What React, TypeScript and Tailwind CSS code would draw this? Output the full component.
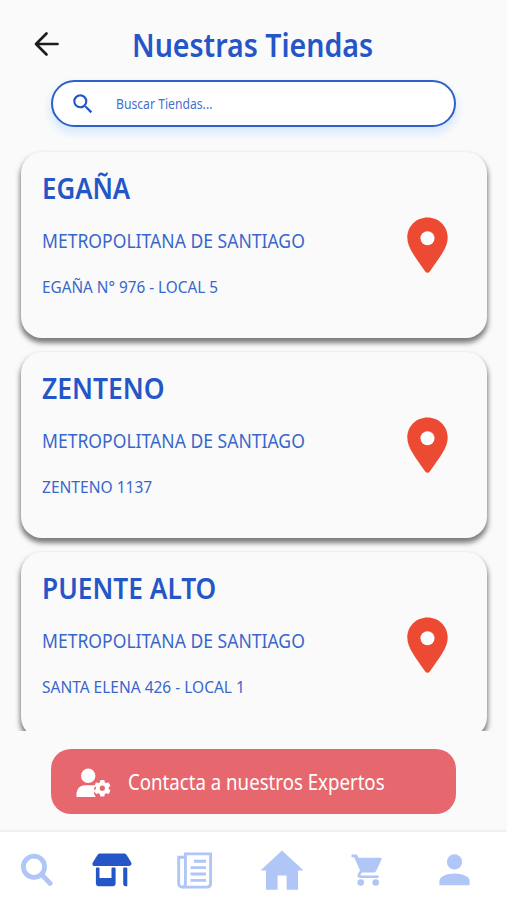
import { MdSearch } from 'react-icons/md';

const stores = [
  {
    name: 'EGAÑA',
    region: 'METROPOLITANA DE SANTIAGO',
    address: 'EGAÑA N° 976 - LOCAL 5',
    nameFit: 'scale-x-[0.89]',
    addressFit: 'scale-x-[0.9]',
  },
  {
    name: 'ZENTENO',
    region: 'METROPOLITANA DE SANTIAGO',
    address: 'ZENTENO 1137',
    nameFit: 'scale-x-[0.912]',
    addressFit: 'scale-x-[0.915]',
  },
  {
    name: 'PUENTE ALTO',
    region: 'METROPOLITANA DE SANTIAGO',
    address: 'SANTA ELENA 426 - LOCAL 1',
    nameFit: 'scale-x-[0.906]',
    addressFit: 'scale-x-[0.911]',
  },
];

function BackIcon() {
  return (
    <svg width="26" height="26" viewBox="0 0 26 26" fill="none" stroke="#1c1c1c" strokeWidth="2.7" strokeLinecap="round" strokeLinejoin="round">
      <path d="M13.500 2.500 3 13l10.500 10.500M3 13h21.500" />
    </svg>
  );
}

function PinIcon() {
  return (
    <svg className="-mt-px" width="41" height="56" viewBox="0 0 41 56" fill="#ec4a33">
      <path d="M20.500.5C9.300.5.3 9.200.3 20.500c0 5.300 2.200 10.300 5 15 3.700 6.200 8.300 12.300 12.700 18.700 1.600 2 3.400 2 5 0 4.400-6.400 9-12.500 12.700-18.700 2.800-4.700 5-9.700 5-15C40.700 9.200 31.700.5 20.500.5Z" />
      <circle cx="20.500" cy="21.200" r="7" fill="#fff" />
    </svg>
  );
}

function ExpertIcon() {
  return (
    <svg className="mt-[2px]" width="36" height="30" viewBox="0 0 36 30" fill="#fff">
      <circle cx="12.200" cy="7.800" r="7.200" />
      <path d="M.5 29v-2.500c0-5.500 3.800-9.200 8-9.200h8c1.400 0 2.200.2 3 .6l-1.700 2.700 1.400 2.500-1.400 2.500 2 3.400Z" />
      <g transform="translate(26.300 20.200)">
        <circle r="6.400" />
        <rect x="-2.300" y="-8.300" width="4.600" height="16.600" rx="1" />
        <rect x="-2.300" y="-8.300" width="4.600" height="16.600" rx="1" transform="rotate(60)" />
        <rect x="-2.300" y="-8.300" width="4.600" height="16.600" rx="1" transform="rotate(120)" />
        <circle r="2.600" fill="#e6686e" />
      </g>
    </svg>
  );
}

function NavSearchIcon() {
  return (
    <svg width="33" height="34" viewBox="0 0 33 34" fill="none" stroke="#b0c6f6">
      <circle cx="14" cy="13.800" r="10.600" strokeWidth="4.800" />
      <path d="m22 21.800 8.200 8.700" strokeWidth="4.800" strokeLinecap="round" />
    </svg>
  );
}

function NavStoreIcon() {
  return (
    <svg width="40" height="34" viewBox="0 0 40 34" fill="#2456c7">
      <path d="M8.300.5h23.600c1.300 0 2.200.5 2.900 1.700l4.300 7c1 1.800.2 3.800-2.300 3.800H2.700C.6 13-.2 11.200.8 9.400L5.300 2.200C6 1 7 .5 8.300.5Z" />
      <path d="M3.900 15.400c0-.6.3-.9.9-.9h1.500c.8 0 1.200.3 1.200 1V25H19.500v-9.500c0-.7.400-1 1.100-1h1.800c.8 0 1.200.3 1.200 1v14.700c0 2-1.100 3-3 3H7c-2 0-3.100-1-3.100-3ZM31.200 15.500c0-.7.400-1 1.100-1h1.800c.8 0 1.200.3 1.200 1v17.700h-1.600c-1.700 0-2.500-.8-2.500-2.400Z" />
    </svg>
  );
}

function NavNewsIcon() {
  return (
    <svg width="36" height="37" viewBox="0 0 36 37" fill="none" stroke="#b0c6f6" strokeWidth="2.900">
      <path d="M8.400 1.900h25.200v29.300c0 2.300-1.400 3.900-3.700 3.900H5.500c-2.300 0-3.800-1.500-3.800-3.700V5.200h6.700Z" />
      <path d="M8.400 5v26.400c0 2-.9 3.500-2.700 3.700M17 9.200h12M13.600 15.600H29M13.600 22H29M13.600 28.400H29" />
    </svg>
  );
}

function NavHomeIcon() {
  return (
    <svg className="-mt-px" width="44" height="40" viewBox="0 0 44 40" fill="#b0c6f6">
      <path d="M22 .4 43.500 20.600H38V39.700H26.600V25.500h-9v14.200H6V20.600H.5Z" />
    </svg>
  );
}

function NavCartIcon() {
  return (
    <svg width="31" height="33" viewBox="0 0 31 33" fill="#b0c6f6">
      <path d="M.5.6h4.600c.7 0 1.100.3 1.400 1l.9 2.100h22c1.100 0 1.600.8 1.100 1.700l-5.300 11.400c-.6 1.200-1.300 1.800-2.700 1.800H11l-1.400 2c-.3.500-.1.800.4.800h17.600v2.500H9.500c-2.700 0-3.700-2.100-2.500-4.200l2-3.300L3.300 3.300H.5Z" />
      <circle cx="9.700" cy="28.500" r="3.300" />
      <circle cx="24.700" cy="28.500" r="3.300" />
    </svg>
  );
}

function NavUserIcon() {
  return (
    <svg width="31" height="32" viewBox="0 0 31 32" fill="#b0c6f6">
      <circle cx="15.500" cy="7.900" r="7.600" />
      <path d="M.4 31.200V27c0-4.800 8.300-7.500 15.100-7.500s15.100 2.700 15.100 7.500v4.200Z" />
    </svg>
  );
}

export default function App() {
  return (
    <div className="flex h-[900px] w-[507px] flex-col overflow-hidden bg-[#fafafa] font-['Noto_Sans',sans-serif] text-[#2456c7]">
      <header className="flex h-20 shrink-0 items-center pt-2 pl-[33px]">
        <BackIcon />
        <h1 className="mt-px ml-[73px] origin-left scale-x-[0.865] text-[33px] font-semibold whitespace-nowrap">Nuestras Tiendas</h1>
      </header>

      <div className="ml-[51px] flex h-[47px] w-[405px] shrink-0 items-center rounded-full border-2 border-[#2f5fca] bg-white pl-[17px] shadow-[0_5px_8px_1px_rgba(190,220,255,0.6)]">
        <MdSearch size={26} />
        <span className="ml-[20px] origin-left scale-x-[0.87] text-[14px] whitespace-nowrap opacity-85">Buscar Tiendas...</span>
      </div>

      <main className="mt-[15px] h-[589px] shrink-0 overflow-hidden pt-[10px]">
        <div className="flex flex-col gap-[14px] px-[21px]">
          {stores.map((store) => (
            <div
              key={store.name}
              className="flex h-[186px] w-[466px] shrink-0 items-center justify-between rounded-[21px] bg-[#fafafa] pr-[39px] pl-[20.5px] shadow-[0_4px_5px_1px_rgba(0,0,0,0.5)]"
            >
              <div className="h-full pt-[16px] whitespace-nowrap">
                <h2 className={`origin-left text-[29px] leading-10 font-semibold ${store.nameFit}`}>{store.name}</h2>
                <p className="mt-[19px] origin-left scale-x-[0.924] text-[19px] leading-7 opacity-90">{store.region}</p>
                <p className={`mt-[20px] origin-left text-[17px] leading-6 opacity-90 ${store.addressFit}`}>{store.address}</p>
              </div>
              <PinIcon />
            </div>
          ))}
        </div>
      </main>

      <button className="mt-[18px] ml-[51px] flex h-[65px] w-[405px] shrink-0 items-center rounded-[20px] bg-[#e6686e] pl-[25px] text-white">
        <ExpertIcon />
        <span className="mt-[2px] ml-[15.5px] origin-left scale-x-[0.888] text-[21px] whitespace-nowrap">Contacta a nuestros Expertos</span>
      </button>

      <nav className="mt-[18px] flex h-[68px] shrink-0 items-center bg-white pt-2 pl-5 shadow-[0_-1px_3px_rgba(0,0,0,0.08)]">
        <NavSearchIcon />
        <div className="ml-[39px]"><NavStoreIcon /></div>
        <div className="ml-[45px]"><NavNewsIcon /></div>
        <div className="ml-[47px]"><NavHomeIcon /></div>
        <div className="ml-[47px]"><NavCartIcon /></div>
        <div className="ml-[57px]"><NavUserIcon /></div>
      </nav>
    </div>
  );
}
